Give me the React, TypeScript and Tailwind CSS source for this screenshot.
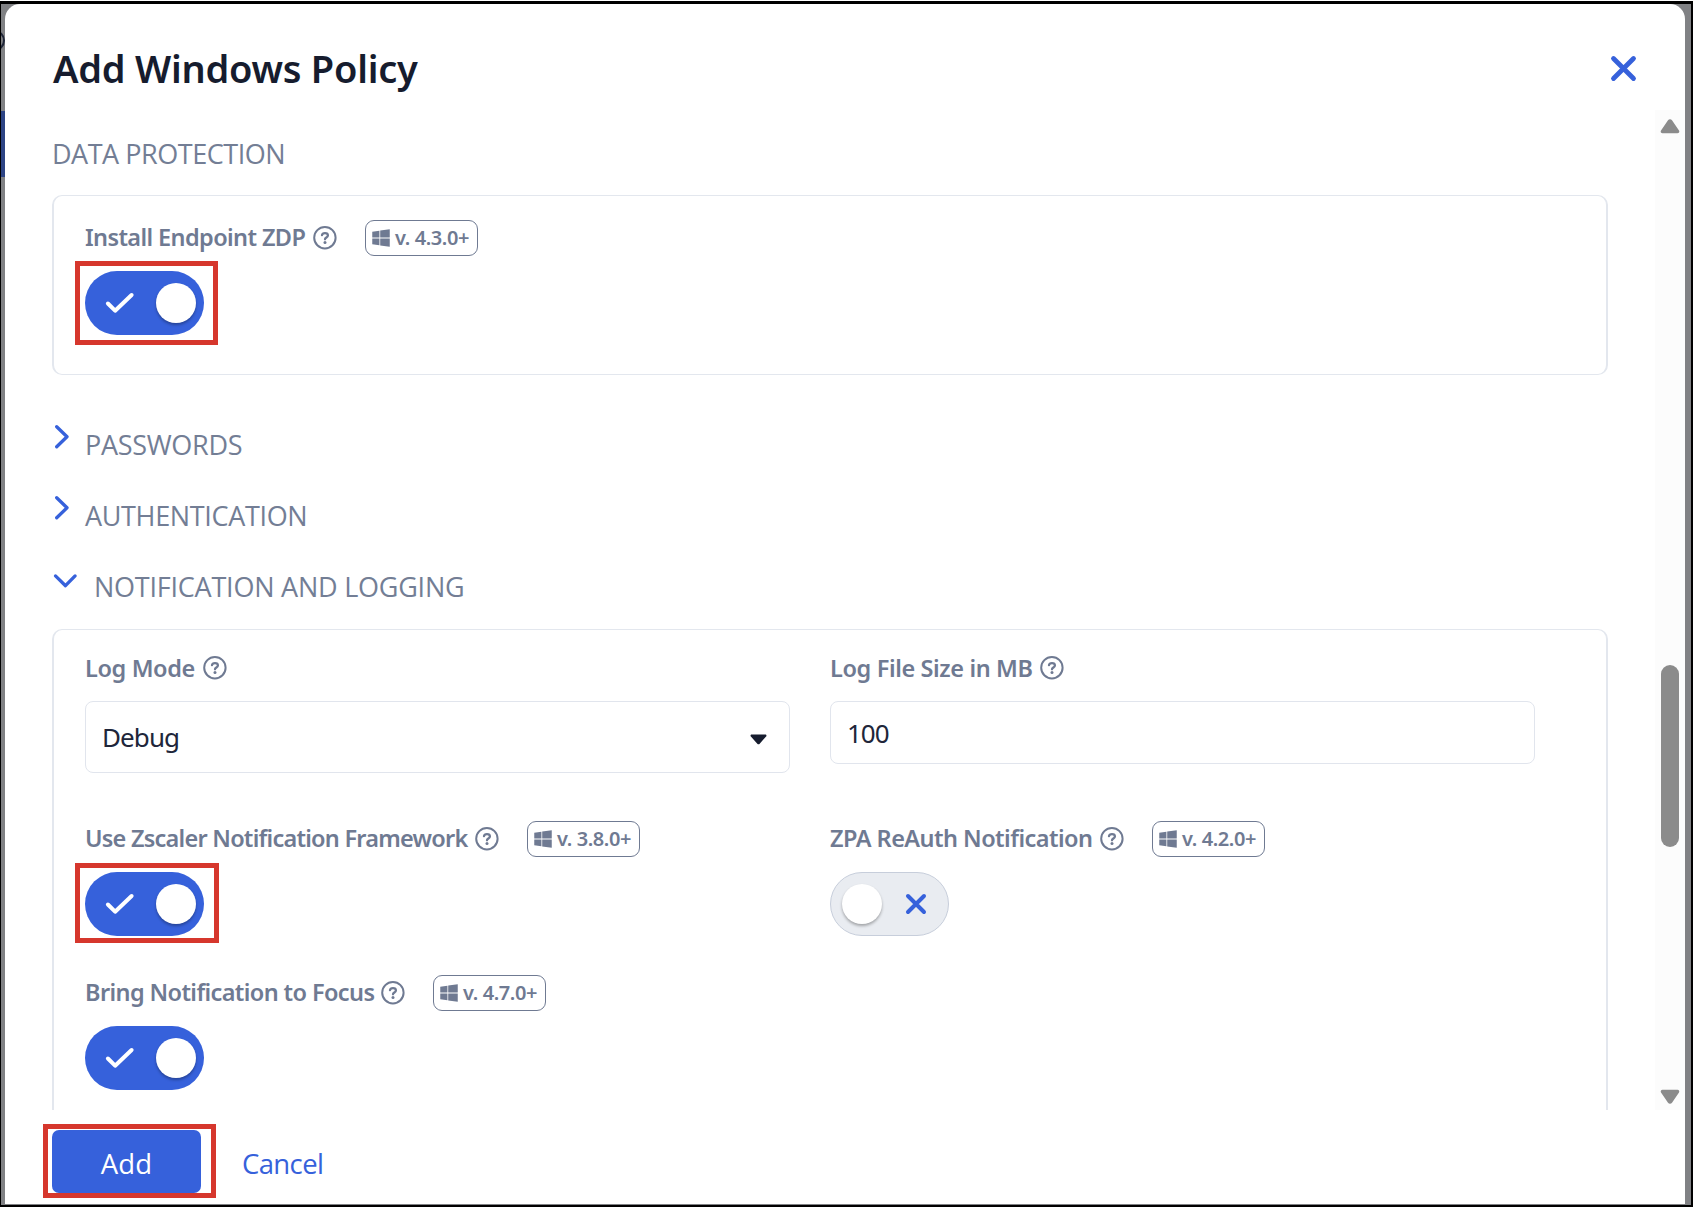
import React from "react";
import { FaWindows } from "react-icons/fa";

function HelpIcon() {
  return (
    <svg width="24" height="24" viewBox="0 0 24 24" fill="none" stroke="#6f7a92" className="shrink-0">
      <circle cx="11.9" cy="11.7" r="10.7" strokeWidth="2" />
      <path d="M9 9.2C9.2 7.9 10.3 7.1 12 7.1c1.7 0 2.9.9 2.9 2.3 0 2-2.9 2.1-2.9 3.9" strokeWidth="2.3" strokeLinecap="round" />
      <circle cx="12" cy="16.6" r="1.5" fill="#6f7a92" stroke="none" />
    </svg>
  );
}

function Badge({ version, className = "" }: { version: string; className?: string }) {
  return (
    <span className={`flex h-9 w-[113px] shrink-0 items-center rounded-[9px] border-[1.5px] border-[#6f7a92] pl-[5px] text-[#6f7a92] ${className}`}>
      <FaWindows size={20} />
      <span className="relative top-[-0.5px] ml-1 text-[20px] font-semibold leading-[30px] tracking-[-0.4px] whitespace-nowrap">v. {version}+</span>
    </span>
  );
}

function Toggle({ on, children }: { on: boolean; children?: React.ReactNode }) {
  return on ? (
    <div className="relative mt-[15px] flex h-16 w-[119px] items-center rounded-full bg-[#3661db]">
      <svg width="30" height="22" viewBox="0 0 30 22" fill="none" stroke="#fff" strokeWidth="4" strokeLinecap="round" strokeLinejoin="round" className="ml-5">
        <path d="M2.9 11.5l7.2 7.2L26.6 3" />
      </svg>
      <span className="ml-[21px] size-10 rounded-full bg-white shadow-[0_2px_3px_rgba(0,0,0,0.3)]" />
      {children}
    </div>
  ) : (
    <div className="relative mt-[15px] flex h-16 w-[119px] items-center rounded-full border border-[#c7cedb] bg-[#e9ecf1]">
      <span className="ml-[11px] size-10 rounded-full bg-white shadow-[0_2px_3px_rgba(0,0,0,0.3)]" />
      <svg width="22" height="22" viewBox="0 0 22 22" fill="none" stroke="#3661db" strokeWidth="4" strokeLinecap="round" className="ml-[23px]">
        <path d="M3 3l16 16M19 3L3 19" />
      </svg>
    </div>
  );
}

function Label({ text, className, version }: { text: string; className: string; version?: string }) {
  return (
    <div className="flex h-9 items-center text-[#6f7a92]">
      <span className={`relative shrink-0 text-[23.5px] font-semibold leading-9 whitespace-nowrap ${className}`}>{text}</span>
      <HelpIcon />
      {version && <Badge version={version} className="ml-7" />}
    </div>
  );
}

function ChevronRight() {
  return (
    <svg width="33" height="25" viewBox="0 0 33 25" fill="none" stroke="#3661db" strokeWidth="3.3" strokeLinecap="round" strokeLinejoin="round" className="shrink-0">
      <path d="M4.7 2.7L15 12.8 4.7 22.8" />
    </svg>
  );
}

export default function App() {
  return (
    <div className="h-[1212px] w-[1694px] overflow-hidden bg-white pt-px font-['Noto_Sans','Open_Sans',sans-serif]">
      <div className="flex h-[1206px] w-[1693px] border-t-[3px] border-r-2 border-b-2 border-l border-black bg-[#808184]">
        <div className="flex w-1 flex-col items-end overflow-hidden">
          <div className="mt-[26px] h-[21px] w-[21px] shrink-0 rounded-full border-2 border-[#1f2638]" />
          <div className="mt-[60px] h-[66px] w-1 shrink-0 bg-[#2c4384]" />
        </div>
        <div className="relative flex h-[1200px] w-[1680px] flex-col rounded-t-[15px] bg-white">
          {/* Header */}
          <header className="flex h-[106px] shrink-0 items-start justify-between pt-[39px] pr-12 pl-12">
            <h1 className="text-[38px] font-semibold leading-[50px] tracking-[-0.25px] text-[#161c2e]">Add Windows Policy</h1>
            <svg width="27" height="27" viewBox="0 0 27 27" fill="none" stroke="#3661db" strokeWidth="4.8" strokeLinecap="round" className="mt-3">
              <path d="M3.5 3.5l20 20M23.5 3.5L3.5 23.5" />
            </svg>
          </header>

          {/* Scrollable body */}
          <main className="flex h-[1000px] shrink-0">
            <div className="flex w-[1650px] flex-col overflow-hidden pl-[47px] text-[27px] text-[#737e95]">
              <h2 className="mt-6 h-10 shrink-0 font-['Open_Sans'] leading-10 tracking-[-0.47px]">DATA PROTECTION</h2>
              <section className="mt-[21px] h-[180px] w-[1556px] shrink-0 rounded-[10px] border border-x-2 border-[#e3e7ee] pt-6 pl-[31px]">
                <Label text="Install Endpoint ZDP" className="-top-px w-[228px] tracking-[-0.61px]" version="4.3.0" />
                <Toggle on>
                  <span className="absolute top-[-10px] left-[-10px] h-[84px] w-[143px] border-[5px] border-[#d6372d]" />
                </Toggle>
              </section>

              <div className="mt-[49px] flex h-10 shrink-0 items-start font-['Open_Sans']">
                <ChevronRight />
                <h2 className="mt-px leading-10 tracking-[-0.3px]">PASSWORDS</h2>
              </div>
              <div className="mt-[31px] flex h-10 shrink-0 items-start font-['Open_Sans']">
                <ChevronRight />
                <h2 className="mt-px leading-10 tracking-[-0.34px]">AUTHENTICATION</h2>
              </div>
              <div className="mt-[31px] flex h-10 shrink-0 items-start font-['Open_Sans']">
                <svg width="42" height="24" viewBox="0 0 42 24" fill="none" stroke="#3661db" strokeWidth="3.3" strokeLinecap="round" strokeLinejoin="round" className="shrink-0">
                  <path d="M3.5 9.9l10 9.8 9.6-9.8" />
                </svg>
                <h2 className="mt-px leading-10 tracking-[-0.23px]">NOTIFICATION AND LOGGING</h2>
              </div>

              <section className="mt-[23px] h-[520px] w-[1556px] shrink-0 rounded-t-[10px] border border-x-2 border-b-0 border-[#e3e7ee] pt-5 pl-[31px]">
                <div className="grid grid-cols-[705px_705px] gap-x-10 text-[#20263a]">
                  <div>
                    <Label text="Log Mode" className="w-[118px] tracking-[-0.38px]" />
                    <div className="mt-[15px] flex h-[72px] items-center justify-between rounded-[8px] border-[1.5px] border-[#e1e5ed] pr-[22px] pl-4 text-[26px]">
                      <span className="tracking-[-0.9px]">Debug</span>
                      <svg width="17" height="11" viewBox="0 0 17 11" fill="#161c2e" className="mt-1">
                        <path d="M1.8.5h13.4c1.2 0 1.7 1.2.9 2L9.7 9.7c-.7.7-1.7.7-2.4 0L.9 2.5C.1 1.7.6.5 1.8.5z" />
                      </svg>
                    </div>
                  </div>
                  <div>
                    <Label text="Log File Size in MB" className="w-[210px] tracking-[-0.38px]" />
                    <div className="mt-[15px] flex h-[63px] items-center rounded-[8px] border-[1.5px] border-[#e1e5ed] pt-0.5 pl-4 text-[26px] tracking-[-1px]">100</div>
                  </div>
                  <div className="mt-12">
                    <Label text="Use Zscaler Notification Framework" className="-top-px w-[390px] tracking-[-0.76px]" version="3.8.0" />
                    <Toggle on>
                      <span className="absolute top-[-9px] left-[-10px] h-20 w-[144px] border-[5px] border-[#d6372d]" />
                    </Toggle>
                  </div>
                  <div className="mt-12">
                    <Label text="ZPA ReAuth Notification" className="-top-px w-[270px] tracking-[-0.54px]" version="4.2.0" />
                    <Toggle on={false} />
                  </div>
                  <div className="mt-[39px]">
                    <Label text="Bring Notification to Focus" className="-top-px w-[296px] tracking-[-0.61px]" version="4.7.0" />
                    <Toggle on />
                  </div>
                </div>
              </section>
            </div>

            {/* Scrollbar */}
            <div className="flex w-[30px] flex-col items-center bg-[#fcfcfc]">
              <svg width="20" height="15" viewBox="0 0 20 15" fill="#8b8b8b" className="mt-[9px] shrink-0">
                <path d="M8 1.3c1-1.5 3-1.5 4 0l7 10.2c.8 1.3 0 2.8-1.5 2.8h-15C1 14.3.2 12.8 1 11.5z" />
              </svg>
              <div className="mt-[531px] h-[182px] w-[18px] shrink-0 rounded-full bg-[#8b8b8b]" />
              <svg width="20" height="15" viewBox="0 0 20 15" fill="#8b8b8b" className="mt-[242px] shrink-0">
                <path d="M8 13.7c1 1.3 3 1.3 4 0l7-10.2c.8-1.3 0-2.8-1.5-2.8h-15C1 .7.2 2.2 1 3.5z" />
              </svg>
            </div>
          </main>

          {/* Footer */}
          <footer className="flex items-start pt-5 pl-[47px] font-['Open_Sans'] text-[27.5px]">
            <button className="relative h-[63px] w-[149px] rounded-[7px] bg-[#3661db] text-white">
              <span className="relative top-[2px] tracking-[0.14px]">Add</span>
              <span className="absolute top-[-6px] left-[-9px] h-[74px] w-[173px] border-[5px] border-[#d6372d]" />
            </button>
            <button className="ml-[41px] h-[63px] pt-1 tracking-[-0.62px] text-[#3661db]">Cancel</button>
          </footer>
        </div>
      </div>
    </div>
  );
}
